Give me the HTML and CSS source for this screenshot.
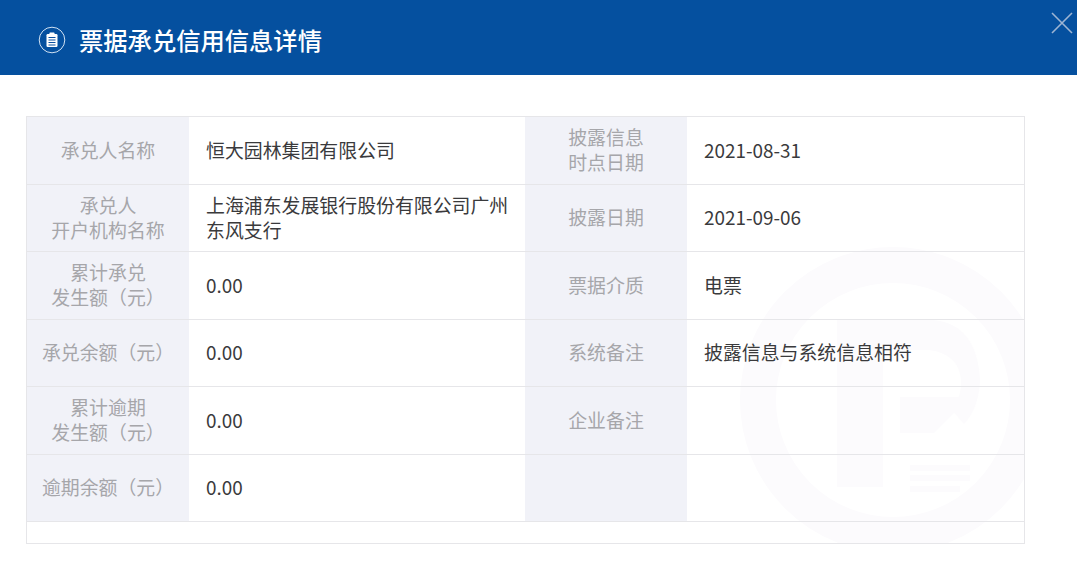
FILE: index.html
```html
<!DOCTYPE html>
<html lang="zh">
<head>
<meta charset="utf-8">
<title>票据承兑信用信息详情</title>
<link rel="stylesheet" href="styles.css">
</head>
<body>
<header class="head">
  <svg class="head-icon" width="28" height="28" viewBox="0 0 28 28">
    <circle cx="14" cy="14" r="12.8" fill="none" stroke="#cfe0f2" stroke-width="1"/>
    <rect x="8.5" y="8" width="11" height="13" rx="1.2" fill="#fff"/>
    <rect x="11.5" y="6.6" width="5" height="2.6" rx="0.6" fill="#fff"/>
    <path d="M10.5 11.5h7M10.5 14h7M10.5 16.5h7M10.5 19h7" stroke="#0b50a0" stroke-width="1" fill="none"/>
  </svg>
  <h1 class="title">票据承兑信用信息详情</h1>
  <svg class="close" width="24" height="24" viewBox="0 0 24 24">
    <path d="M2 2L22 22M22 2L2 22" stroke="#9db4d3" stroke-width="1.6" fill="none"/>
  </svg>
</header>
<main class="content">
  <section class="table">
    <svg class="mark" width="320" height="320" viewBox="0 0 320 320">
      <circle cx="160" cy="160" r="135" fill="none" stroke="#fcfbfd" stroke-width="36"/>
      <path d="M104 80h46v167h-46z" fill="#fcfbfd"/>
      <path d="M150 80h50q44 4 47 60q-1 28 -16 44l-12 -14q10 -14 9 -30q-2 -26 -32 -30h-46z" fill="#fcfbfd"/>
      <path d="M167 157h70l-36 36h-34z" fill="#fcfbfd"/>
      <path d="M177 225h60v6h-60zM177 235h60v6h-60zM177 246h50v6h-50z" fill="#fcfbfd"/>
    </svg>
    <div class="row">
      <div class="label">承兑人名称</div><div class="value">恒大园林集团有限公司</div>
      <div class="label">披露信息<br>时点日期</div><div class="value">2021-08-31</div>
    </div>
    <div class="row">
      <div class="label">承兑人<br>开户机构名称</div><div class="value">上海浦东发展银行股份有限公司广州东风支行</div>
      <div class="label">披露日期</div><div class="value">2021-09-06</div>
    </div>
    <div class="row">
      <div class="label">累计承兑<br>发生额（元）</div><div class="value">0.00</div>
      <div class="label">票据介质</div><div class="value">电票</div>
    </div>
    <div class="row">
      <div class="label">承兑余额（元）</div><div class="value">0.00</div>
      <div class="label">系统备注</div><div class="value">披露信息与系统信息相符</div>
    </div>
    <div class="row">
      <div class="label">累计逾期<br>发生额（元）</div><div class="value">0.00</div>
      <div class="label">企业备注</div><div class="value"></div>
    </div>
    <div class="row">
      <div class="label">逾期余额（元）</div><div class="value">0.00</div>
      <div class="label"></div><div class="value"></div>
    </div>
  </section>
</main>
</body>
</html>
```

FILE: styles.css
```css
* { box-sizing: border-box; }
html, body { margin: 0; padding: 0; height: 100%; overflow: hidden; }
body {
  background: #fff;
  font-family: "Noto Sans CJK SC", "Noto Sans", sans-serif;
  color: #333;
}
.head {
  position: relative;
  height: 75px;
  background: #05509f;
  display: flex;
  align-items: center;
  gap: 13px;
  padding: 4px 0 0 38px;
}
.head-icon { flex: none; }
.title {
  margin: 0;
  font-size: 24.3px;
  font-weight: 500;
  line-height: 30px;
  color: #fff;
}
.close { position: absolute; right: 3px; top: 11px; }
.content { padding: 41px 52px 0 26px; }
.table {
  position: relative;
  overflow: hidden;
  width: 999px;
  height: 428px;
  border: 1px solid #e6e6e9;
}
.mark { position: absolute; left: 706px; top: 123px; }
.row {
  position: relative;
  display: grid;
  grid-template-columns: 162px 336px 162px 1fr;
  height: 67.5px;
  border-bottom: 1px solid #e6e6e9;
}
.label, .value {
  display: flex;
  align-items: center;
  font-size: 18.9px;
  line-height: 25px;
  padding-bottom: 2px;
}
.label {
  justify-content: center;
  text-align: center;
  background: #f1f2f8;
  color: #a6a6aa;
}
.value {
  padding-left: 17px;
  padding-right: 12px;
  color: #3a3a3c;
}
```
